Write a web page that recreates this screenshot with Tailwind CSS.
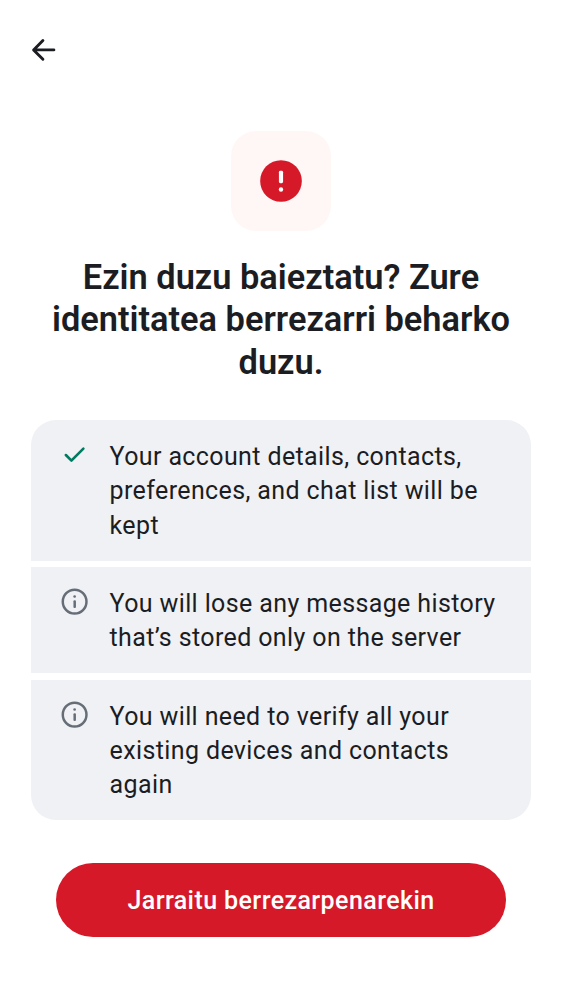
<!DOCTYPE html>
<html lang="eu"><head><meta charset="utf-8"><title>Identitatea</title>
<script src="https://cdn.jsdelivr.net/npm/@tailwindcss/browser@4"></script></head>
<body class="bg-white">
<main class="w-[562px] h-[1000px] overflow-hidden bg-white text-[#1b1d22] font-['Roboto',sans-serif] flex flex-col">
<header class="h-[100px] shrink-0 pl-[25px] pt-[31px]">
<svg class="w-[38px] h-[38px]" viewBox="0 0 38 38" fill="none" stroke="#1b1d22" stroke-width="2.9" stroke-linecap="round" stroke-linejoin="round"><path d="M28.9 18.9H8.8M17.9 9.5 8.6 18.9l9.3 9.4"/></svg>
</header>
<div class="mt-[31px] mx-auto size-[100px] shrink-0 rounded-[25px] bg-[#fff7f6] flex items-center justify-center">
<svg class="size-[50px]" viewBox="0 0 24 24"><circle cx="12" cy="12" r="10" fill="#d51928"/><rect x="11" y="7.1" width="2" height="6" rx=".7" fill="#fff"/><circle cx="12" cy="16.1" r="1.05" fill="#fff"/></svg>
</div>
<h1 class="mt-[25px] h-[127px] text-center font-semibold text-[34.4px] leading-[42.4px]">Ezin duzu baieztatu? Zure<br>identitatea berrezarri beharko<br>duzu.</h1>
<section class="mt-[37px] mx-[31px] flex flex-col text-[25px] leading-[34.4px] tracking-[0.38px]">
<div class="h-[141px] bg-[#f0f1f5] rounded-t-[25px] pt-[20px] pl-[28.3px] flex gap-[19px]">
<svg class="size-[31.25px] -mt-[0.6px] shrink-0" viewBox="0 0 24 24" fill="#007a61"><path d="m9.55 15.15 8.475-8.475q.3-.3.7-.3t.7.3.3.713-.3.712l-9.175 9.2q-.3.3-.7.3t-.7-.3L4.55 13q-.3-.3-.288-.713t.313-.712.713-.3.712.3z"/></svg>
<p>Your account details, contacts,<br>preferences, and chat list will be<br>kept</p></div>
<div class="mt-[6px] h-[106px] bg-[#f0f1f5] pt-[20px] pl-[28.3px] flex gap-[19px]">
<svg class="size-[31.25px] -mt-[0.9px] shrink-0" viewBox="0 0 24 24" fill="#656d77"><circle cx="12" cy="12" r="9.1" fill="none" stroke="#656d77" stroke-width="1.9"/><circle cx="12" cy="8.1" r="1"/><rect x="11.1" y="11" width="1.9" height="5.9" rx=".8"/></svg>
<p>You will lose any message history<br>that’s stored only on the server</p></div>
<div class="mt-[7px] h-[140px] bg-[#f0f1f5] rounded-b-[25px] pt-[19.6px] pl-[28.3px] flex gap-[19px]">
<svg class="size-[31.25px] -mt-[0.9px] shrink-0" viewBox="0 0 24 24" fill="#656d77"><circle cx="12" cy="12" r="9.1" fill="none" stroke="#656d77" stroke-width="1.9"/><circle cx="12" cy="8.1" r="1"/><rect x="11.1" y="11" width="1.9" height="5.9" rx=".8"/></svg>
<p>You will need to verify all your<br>existing devices and contacts<br>again</p></div>
</section>
<button class="mt-[43px] mx-[56px] h-[74px] pt-[1px] shrink-0 rounded-full bg-[#d51928] text-white font-medium text-[25px] tracking-[0.42px]">Jarraitu berrezarpenarekin</button>
</main></body></html>
